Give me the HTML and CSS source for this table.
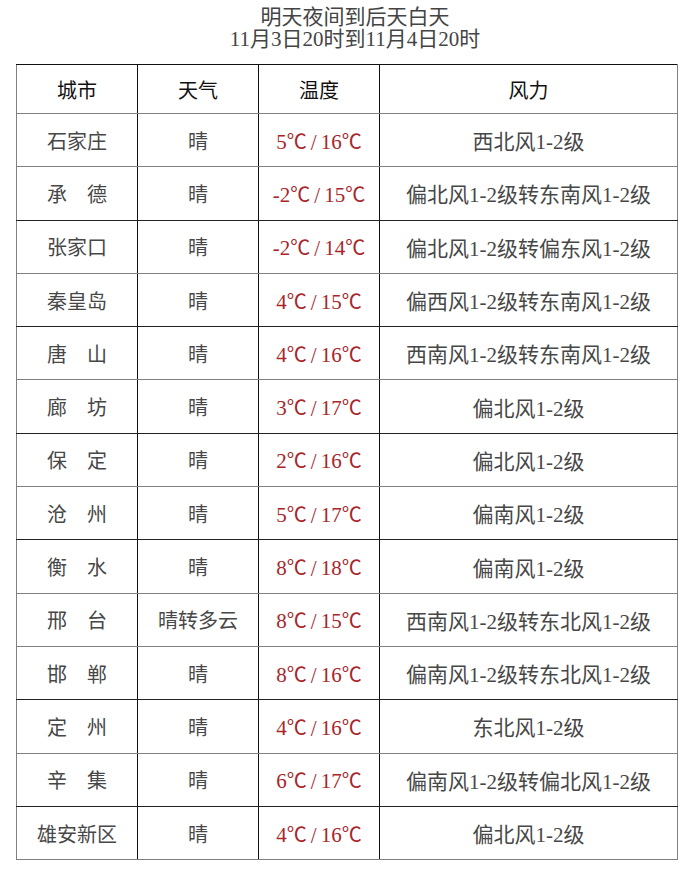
FILE: index.html
```html
<!DOCTYPE html>
<html lang="zh-CN">
<head>
<meta charset="utf-8">
<title>明天夜间到后天白天</title>
<link rel="stylesheet" href="styles.css">
</head>
<body>
<div class="page">
  <div class="title">
    <div>明天夜间到后天白天</div>
    <div>11月3日20时到11月4日20时</div>
  </div>
  <table class="forecast">
    <colgroup>
      <col class="c-city"><col class="c-wx"><col class="c-temp"><col class="c-wind">
    </colgroup>
    <thead>
      <tr class="head"><th>城市</th><th>天气</th><th>温度</th><th>风力</th></tr>
    </thead>
    <tbody>
      <tr><td>石家庄</td><td>晴</td><td class="temp">5<span class="deg">℃</span><span class="sl">/</span>16<span class="deg">℃</span></td><td>西北风1-2级</td></tr>
      <tr class="dark"><td>承　德</td><td>晴</td><td class="temp">-2<span class="deg">℃</span><span class="sl">/</span>15<span class="deg">℃</span></td><td>偏北风1-2级转东南风1-2级</td></tr>
      <tr><td>张家口</td><td>晴</td><td class="temp">-2<span class="deg">℃</span><span class="sl">/</span>14<span class="deg">℃</span></td><td>偏北风1-2级转偏东风1-2级</td></tr>
      <tr class="dark"><td>秦皇岛</td><td>晴</td><td class="temp">4<span class="deg">℃</span><span class="sl">/</span>15<span class="deg">℃</span></td><td>偏西风1-2级转东南风1-2级</td></tr>
      <tr><td>唐　山</td><td>晴</td><td class="temp">4<span class="deg">℃</span><span class="sl">/</span>16<span class="deg">℃</span></td><td>西南风1-2级转东南风1-2级</td></tr>
      <tr class="dark"><td>廊　坊</td><td>晴</td><td class="temp">3<span class="deg">℃</span><span class="sl">/</span>17<span class="deg">℃</span></td><td>偏北风1-2级</td></tr>
      <tr><td>保　定</td><td>晴</td><td class="temp">2<span class="deg">℃</span><span class="sl">/</span>16<span class="deg">℃</span></td><td>偏北风1-2级</td></tr>
      <tr class="dark"><td>沧　州</td><td>晴</td><td class="temp">5<span class="deg">℃</span><span class="sl">/</span>17<span class="deg">℃</span></td><td>偏南风1-2级</td></tr>
      <tr><td>衡　水</td><td>晴</td><td class="temp">8<span class="deg">℃</span><span class="sl">/</span>18<span class="deg">℃</span></td><td>偏南风1-2级</td></tr>
      <tr><td>邢　台</td><td>晴转多云</td><td class="temp">8<span class="deg">℃</span><span class="sl">/</span>15<span class="deg">℃</span></td><td>西南风1-2级转东北风1-2级</td></tr>
      <tr class="dark"><td>邯　郸</td><td>晴</td><td class="temp">8<span class="deg">℃</span><span class="sl">/</span>16<span class="deg">℃</span></td><td>偏南风1-2级转东北风1-2级</td></tr>
      <tr><td>定　州</td><td>晴</td><td class="temp">4<span class="deg">℃</span><span class="sl">/</span>16<span class="deg">℃</span></td><td>东北风1-2级</td></tr>
      <tr class="dark"><td>辛　集</td><td>晴</td><td class="temp">6<span class="deg">℃</span><span class="sl">/</span>17<span class="deg">℃</span></td><td>偏南风1-2级转偏北风1-2级</td></tr>
      <tr><td>雄安新区</td><td>晴</td><td class="temp">4<span class="deg">℃</span><span class="sl">/</span>16<span class="deg">℃</span></td><td>偏北风1-2级</td></tr>
    </tbody>
  </table>
</div>
</body>
</html>
```
FILE: styles.css
```css
html, body {
  margin: 0;
  padding: 0;
  background: #ffffff;
}

.page {
  width: 690px;
  padding: 6px 0 0 16px;
  box-sizing: border-box;
  font-family: "Liberation Serif", "Noto Sans CJK SC", serif;
  color: #474747;
}

.title {
  width: 660px;
  padding-left: 18px;
  box-sizing: border-box;
  text-align: center;
  font-size: 21px;
  line-height: 22px;
  color: #444444;
}

.forecast {
  margin-top: 14px;
  width: 661px;
  border-collapse: collapse;
  table-layout: fixed;
  font-size: 20px;
}

.c-city, .c-wx, .c-temp { width: 121px; }
.c-wind { width: 298px; }

.forecast th,
.forecast td {
  padding: 0;
  text-align: center;
  vertical-align: middle;
  border-left: 1px solid #111111;
  border-right: 1px solid #111111;
  border-top: 1px solid #808080;
  border-bottom: 1px solid #808080;
  white-space: nowrap;
}

.forecast th:first-child,
.forecast td:first-child { border-left-color: #808080; }
.forecast th:last-child,
.forecast td:last-child { border-right-color: #808080; }

.forecast .head th {
  height: 48px;
  font-weight: normal;
  color: #111111;
  border-top-color: #111111;
}

.forecast tbody tr { height: 53.3px; }

.forecast tbody tr.dark td { border-bottom-color: #222222; }

.forecast td.temp {
  color: #a8262a;
  font-size: 21px;
}

.deg {
  font-family: "Noto Sans CJK SC", sans-serif;
  font-size: 20px;
}

.sl {
  display: inline-block;
  margin: 0 4px;
  transform: scaleY(1.1);
}

.forecast td:last-child {
  font-size: 21px;
}
```
